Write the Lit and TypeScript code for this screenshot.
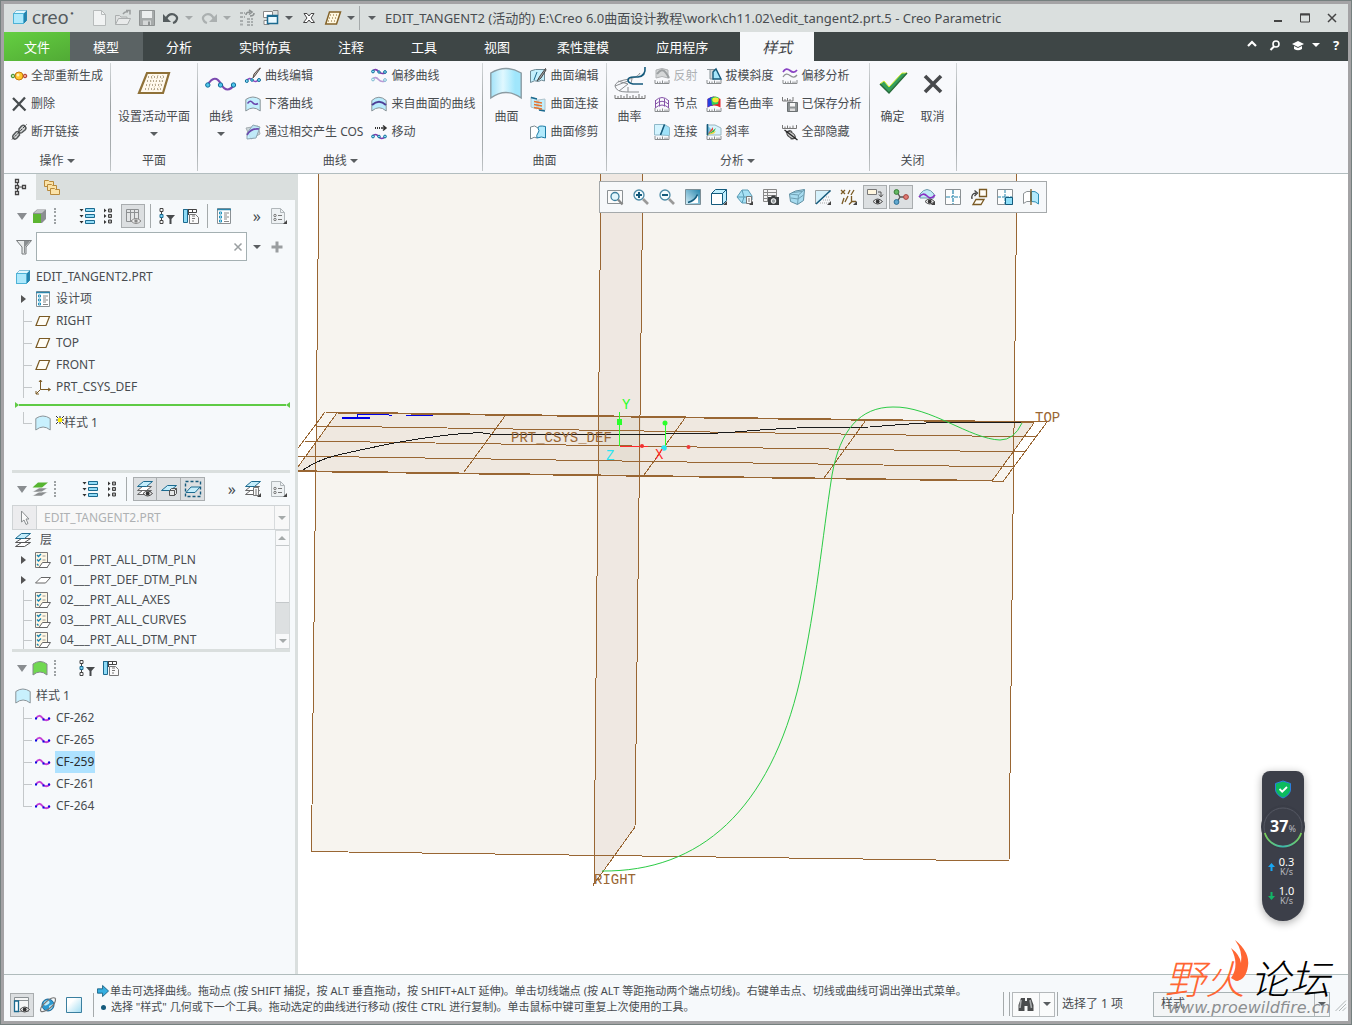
import { LitElement, html, css, svg, nothing, type TemplateResult } from "lit";
import { customElement, state } from "lit/decorators.js";

const RULER = svg`<path d="M1 12v3.500h14V12M3.500 13.500v2M6 13.500v2M8.500 12.500v3M11 13.500v2M13 13.500v2" fill="none" stroke="#8a8d8f"/>`;
const DROP = svg`<path d="M16 12v4h-4z" fill="#444"/>`;
const PAGE_LINES = svg`<path d="M9 8h3M9 10.500h3M9 13h2" stroke="#777" fill="none"/>`;
const EYE = svg`<path d="M6 12.500q4.500-5 9.500 0q-5 5-9.500 0z" fill="#e8e8e8" stroke="#4a4a4a"/><circle cx="10.700" cy="12.500" r="1.900" fill="#333"/>`;

const GLYPHS: Record<string, TemplateResult> = {
  cube: svg`<path d="M1.500 4.500l3-3h10v10l-3 3h-10z" fill="#8adcf7" stroke="#2c8db5"/><path d="M11.500 4.500l3-3v10l-3 3z" fill="#2583ad"/><path d="M1.500 4.500h10v10h-10z" fill="#aee9fc" stroke="#4db2d6"/><path d="M2 4l2.500-2.500h10L12 4z" fill="#e2f8ff"/>`,
  newfile: svg`<path d="M2.500 .500h8l4 4v11h-12z" fill="#f1f3f3" stroke="#b7bbbb"/><path d="M10.500 .500v4h4" fill="none" stroke="#b7bbbb"/>`,
  open: svg`<path d="M.500 14.500v-9h4l1.500 1.500h6v2" fill="#dfe1e1" stroke="#abafaf"/><path d="M.500 14.500l3-6h12l-3 6z" fill="#e8eaea" stroke="#abafaf"/><path d="M8 4q2-3 5-2M11 .500h4v4" fill="none" stroke="#9a9e9e" stroke-width="1.500"/>`,
  save: svg`<path d="M.500 .500h15v15h-15z" fill="#a7abab" stroke="#8f9393"/><path d="M3 1h10v7H3z" fill="#eceeee"/><path d="M4 10.500h8V15H4z" fill="#d5d8d8"/><path d="M9 11.500h2V15H9z" fill="#8f9393"/>`,
  undo: svg`<path d="M3 9q3-6 8-4.500q5 2.500 2 6.500q-1 1.500-3 2" fill="none" stroke="#555c5e" stroke-width="2.300"/><path d="M0 4v8h8z" fill="#555c5e"/>`,
  redo: svg`<path d="M13 9Q10 3 5 4.500Q0 7 3 11q1 1.500 3 2" fill="none" stroke="#abb0b0" stroke-width="2.300"/><path d="M16 4v8H8z" fill="#abb0b0"/>`,
  regen: svg`<path d="M1 3h5M1 7h5M1 11h4M1 14.500h4M8 9h6M8 12h6M8 15h6" stroke="#a8adad" stroke-width="2" stroke-dasharray="3 1"/><path d="M7 5q0-3 4-3M10 0l3 2-3 2.500M15 3q0 3-4 3" fill="none" stroke="#8d9292" stroke-width="1.600"/>`,
  windows: svg`<path d="M.500 1.500h9v6h-9z" fill="#fff" stroke="#888"/><path d="M1 10.500h5v4H1z" fill="#fff" stroke="#888"/><path d="M10 .500h5v5" fill="none" stroke="#888"/><path d="M4.500 5.500h10v8h-10z" fill="#e9f9ff" stroke="#1b6a8f" stroke-width="1.500"/><path d="M4.500 6.500h10" stroke="#1b6a8f"/>`,
  closex: svg`<path d="M3 3.500h3l2 2.500 2-2.500h3L10 8l3.500 4.500h-3.500L8 10l-2 2.500H2.500L6 8z" fill="#fff" stroke="#444"/>`,
  planeGrid: svg`<path d="M4.500 2h11l-4 12H.700z" fill="#fff8e2" stroke="#85642a" stroke-width="1.500"/><path d="M5 5h8M4 8h8M3 11h8" stroke="#85642a" stroke-dasharray="1 2"/>`,
  regenAll: svg`<path d="M0 8h16" stroke="#777"/><circle cx="2" cy="8" r="1.800" fill="#b8e09c" stroke="#3c8a2c"/><circle cx="14" cy="8" r="1.800" fill="#f0a090" stroke="#b0382c"/><circle cx="8" cy="8" r="4" fill="#ffc62e" stroke="#c47a10"/><circle cx="7" cy="7" r="1.500" fill="#fff2b5"/>`,
  del: svg`<path d="M2 2l12.500 12.500M14 1.500L2 14.500" stroke="#474c4f" stroke-width="2.300"/>`,
  unlink: svg`<path d="M8 5l2.500-3q2-1.500 3.500 0t.500 3.500L11 8.500q-1.500 1-3 0zM8 8.500Q6.500 7 5 8L2 11.500q-1 1.500 .500 3t3.500-.500L8.500 11z" fill="#d5d8d9" stroke="#55595b" stroke-width="1.500"/><path d="M1 15.500L15.500 .500" stroke="#333" stroke-dasharray="3 1"/>`,
  curveEdit: svg`<path d="M1.500 13q3-4.500 6-1t7-1" fill="none" stroke="#8a4cc0" stroke-width="1.500"/><circle cx="1.800" cy="13" r="1.500" fill="#7fdcf7" stroke="#136f9b"/><circle cx="7" cy="12" r="1.300" fill="#7fdcf7" stroke="#136f9b"/><circle cx="14" cy="12" r="1.500" fill="#7fdcf7" stroke="#136f9b"/><path d="M15.500 0l-5 7-2.500 3 1-4L14 .500z" fill="#b9bcbd" stroke="#5a4c44"/>`,
  dropCurve: svg`<path d="M.800 3.500q7-5 14.400 0v11.500q-7-6-14.400 0z" fill="#c3effd" stroke="#8a9499"/><path d="M2.500 7.500q3-4 5-1t5.500 1" fill="none" stroke="#6b47ad" stroke-width="1.500"/>`,
  cosCurve: svg`<path d="M1 4l12-2 2 8-9 5z" fill="#cdd6da" stroke="#a5adb1"/><path d="M2 9l6-8 7 2-4 11-9 1z" fill="#bdeeff" fill-opacity=".800" stroke="#8ea6b1"/><path d="M2 11Q6 4 14 5" fill="none" stroke="#6b47ad" stroke-width="1.600"/>`,
  offsetCurve: svg`<path d="M1.500 3q3-3 6 .500t7 1" fill="none" stroke="#7b3fae" stroke-width="1.600"/><circle cx="2" cy="3.500" r="1.400" fill="#8fe3fb" stroke="#136f9b"/><circle cx="8" cy="4" r="1.200" fill="#8fe3fb" stroke="#136f9b"/><circle cx="14" cy="4" r="1.400" fill="#8fe3fb" stroke="#136f9b"/><path d="M1.500 11q3-3 6 .500t7 1" fill="none" stroke="#b99bd6" stroke-width="1.600"/><circle cx="2" cy="11.500" r="1.400" fill="#e2f7fd" stroke="#82bcd3"/><circle cx="14" cy="12" r="1.400" fill="#e2f7fd" stroke="#82bcd3"/>`,
  fromSurface: svg`<path d="M.800 4.500q7-6.500 14.400 0v10.500q-7-6.500-14.400 0z" fill="#b9ecfd" stroke="#8a9499"/><path d="M1 9Q8 2.500 15 9" fill="none" stroke="#4d3f96" stroke-width="2"/>`,
  move: svg`<path d="M4 4h6" stroke="#333" stroke-width="2" stroke-dasharray="1 1"/><path d="M10 4h5M12 1.500L15 4l-3 2.500" fill="none" stroke="#333" stroke-width="1.500"/><path d="M1.500 12.500q3-4 6 0t7 0" fill="none" stroke="#7b3fae" stroke-width="1.600"/><circle cx="2" cy="12.500" r="1.400" fill="#8fe3fb" stroke="#136f9b"/><circle cx="8" cy="12.500" r="1.300" fill="#8fe3fb" stroke="#136f9b"/><circle cx="14" cy="12.500" r="1.400" fill="#8fe3fb" stroke="#136f9b"/>`,
  surfEdit: svg`<path d="M.500 3l5-1.500h9V13q-3-2-6 .500q-4-2-8 1z" fill="#c3effd" stroke="#6e8a96"/><path d="M4 12l3-8" stroke="#1b6a8f"/><path d="M15.500 .500L10 8l-3 5 4-3 5-8z" fill="#a5a9ab" stroke="#444"/>`,
  surfJoin: svg`<path d="M1 1l6 2v10l-6-2zM8 4l7-1v11l-7-1z" fill="#c3effd" stroke="#b0c3cb"/><path d="M1 1.500l6 1.500M9 14l6 1" stroke="#1b6a8f" stroke-width="1.500"/><path d="M4 5.500l8 1.500M4 8.500l8 1.500M4 11.500l8 1.500" stroke="#e6732c" stroke-width="1.300"/>`,
  surfTrim: svg`<path d="M8 4q-3-3.500-7.500-1v12q4-3 6.500-1" fill="#fff" stroke="#7b8b92"/><path d="M8 4q0-3 7.500-1.500V14q-4-2-8.500 0q-1-3 1-5T8 4z" fill="#b2eafc" stroke="#1d7ca6"/>`,
  reflect: svg`<path d="M2 2q6-3 12 0v8q-6-3-12 0z" fill="#d5d7d8" stroke="#b0b3b5"/><path d="M3 6q5-7 9-1t2 4" fill="none" stroke="#9b9fa1" stroke-width="2"/>${RULER}`,
  knots: svg`<path d="M1 5Q8-2 15 5M1 8.500Q8 2 15 8.500M1 12Q8 6 15 12M1.500 4v8M5.500 2.500v8M10.500 2.500v8M14.500 4v8" fill="none" stroke="#8553a8"/>${RULER}`,
  connect: svg`<path d="M.500 .500h10l-4 10.500H.500z" fill="#d3f4ff" stroke="#8fb9c9"/><path d="M10.500 .500l5 3v8l-9-.500z" fill="#9fe2fa" stroke="#8fb9c9"/><path d="M10.500 .500L6.500 11" stroke="#145a7c" stroke-width="1.500"/>${RULER}`,
  draft: svg`<path d="M1 1.500h8M8 1v10H4V1" fill="#d5d8da" stroke="#8a9499"/><path d="M7 11V4l3-3 5 10z" fill="#a6e6fb" stroke="#145a7c" stroke-width="1.400"/>${RULER}`,
  shaded: svg`<path d="M1.500 3q6.500-5 13 0v8.500q-6.500-4-13 0z" fill="#e8262b"/><path d="M1.500 3q3-2.500 6.500-2.500l-1 9q-3 0-5.500 2z" fill="#263fe0"/><path d="M5 2q5-3 8 0l-1 6-6 1z" fill="#31d158"/><ellipse cx="9.500" cy="4" rx="3.200" ry="2.400" fill="#fbe93a"/>${RULER}`,
  slope: svg`<path d="M1 1h8l6 3v7H1z" fill="#d6f3fd" stroke="#9ab4bf"/><path d="M1 11V1l5 5z" fill="#7cc8e6"/><path d="M1 11l6-8v3z" fill="#e8463b"/><path d="M1 11l9-7-2 4z" fill="#42b649"/><path d="M1 11l9-4-2 2.500z" fill="#f4d536"/><path d="M1.500 0v11.500" stroke="#145a7c" stroke-width="1.500"/>${RULER}`,
  offsetAna: svg`<path d="M1 4q3-5 7-1.500T15 2" fill="none" stroke="#8a45c4" stroke-width="1.700"/><path d="M1 9q3-5 7-1.500T15 7" fill="none" stroke="#8f9294" stroke-width="1.300"/>${RULER}`,
  savedAna: svg`<path d="M.500 1v4H11V1M3 3v2M5.500 2v3M8 3v2" fill="none" stroke="#777"/><path d="M5.500 6.500h10v9h-10z" fill="#8d9294" stroke="#6a6f71"/><path d="M8 7h5v3.500H8z" fill="#f5f5f5"/><path d="M8 12.500h5V15H8z" fill="#ddd"/>`,
  hideAll: svg`<path d="M.500 1v3.500h14V1M3 2.500v2M5.500 1.500v3M8 2.500v2M11 1.500v3" fill="none" stroke="#777"/><path d="M4 9q4-4 6-1M13.500 12.500q0 3-5 2" fill="none" stroke="#555" stroke-width="1.300"/><ellipse cx="9" cy="11" rx="4.500" ry="2.500" transform="rotate(35 9 11)" fill="#ccc" stroke="#444"/><path d="M2.500 6L15.500 16" stroke="#222" stroke-width="1.300"/>`,
  bigPlane: svg`<path d="M9 4h22l-6 20H1z" transform="translate(0 2)" fill="#fff9ee" stroke="#8f7138" stroke-width="2.200"/><path d="M10 10h18M9 14h18M8 18h18M7 22h18" stroke="#6a5633" stroke-dasharray="1 2"/><path d="M15 8l-5 16M20 8l-5 16M25 8l-5 16" stroke="#cbb98f" stroke-dasharray="1 2"/>`,
  bigCurve: svg`<path d="M2.500 18Q10 6 16 17t14 0" fill="none" stroke="#7b4ab0" stroke-width="2.200"/><circle cx="2.800" cy="18" r="2.200" fill="#4fc5ea" stroke="#136f9b"/><circle cx="15.500" cy="18" r="2.200" fill="#4fc5ea" stroke="#136f9b"/><circle cx="28.500" cy="18" r="2.200" fill="#4fc5ea" stroke="#136f9b"/>`,
  bigSurface: svg`<defs><linearGradient id="bs"><stop offset="0" stop-color="#a2e2f8"/><stop offset=".400" stop-color="#e0f8ff"/><stop offset=".800" stop-color="#a0e6fc"/></linearGradient></defs><path d="M.800 6Q16-3 31.200 6v25Q16 20 .800 31z" fill="url(#bs)" stroke="#8b9ba2" stroke-width="1.400"/>`,
  bigCurvature: svg`<path d="M1 19q0-4 9-6 14-2 16-7M1 19q1 6 12 6h12M1 19l13-5M5 24l9-7M14 25v-5M4 14l10 3M18 12l-1 4" fill="none" stroke="#8a8d90"/><path d="M31 0q1 9-7 10H20q-6 0-6 3 0 3 5 4h10" fill="none" stroke="#145a7c" stroke-width="1.600"/><path d="M1 28v3.500h30V28M4 29v2M7 28v3M10 29v2M13 27v4M16 29v2M19 28v3M22 29v2M25 27v4M28 29v2" fill="none" stroke="#777"/>`,
  bigOk: svg`<path d="M3 17l4-3 5 6L25 6h5L12 26z" fill="#35a05c" stroke="#d8ee2e"/><path d="M3 17l9 9L30 6" fill="none" stroke="#276b3e" stroke-width="1.500"/>`,
  bigCancel: svg`<path d="M8 9l16 16M24 9L8 25" stroke="#47494c" stroke-width="3.600"/>`,
  treeTab: svg`<g transform="translate(2 0)"><path d="M3.500 5v6M5 8h6M3.500 3v2M3.500 11v2" stroke="#444"/><path d="M1.500 .500h3v3h-3zM1.500 6.500h3v3h-3zM1.500 12.500h3v3h-3zM8.500 6.500h3v3h-3z" fill="#fff" stroke="#444" stroke-width="1.300"/></g>`,
  folders: svg`<g fill="#fbe3a8" stroke="#b88a3c"><path d="M.500 1.500h4l1 1h4v5h-9z"/><path d="M3.500 5.500h4l1 1h4v5h-9z"/><path d="M6.500 9.500h4l1 1h4v5h-9z"/></g>`,
  greenCube: svg`<path d="M1 5l4-3.500h9V11l-4 4H1z" fill="#8b8e90"/><path d="M2 5l3-3h8l-3 3z" fill="#c1c4c5"/><path d="M1 6h8v9H1z" fill="#5cb531"/>`,
  expand: svg`<path d="M.500 1h4l-2 2.500zM.500 7h4l-2 2.500zM.500 13h4l-2 2.500z" fill="#333"/><g fill="#93dcf7" stroke="#1b6a8f"><path d="M6.500 .500h9v3h-9zM6.500 6.500h9v3h-9zM6.500 12.500h9v3h-9z"/></g>`,
  collapse: svg`<path d="M4 .500v4L6.500 2.500zM4 6v4L6.500 8zM4 12v4l2.500-2z" fill="#333"/><g fill="#aaa" stroke="#444"><path d="M8.500 1h3v3h-3zM8.500 6.500h3v3h-3zM8.500 12h3v3h-3z"/></g>`,
  columnsEye: svg`<path d="M1.500 1.500h12v12h-12zM1.500 4.500h12M5.500 1.500v12M9.500 1.500v12" fill="#e3e5e6" stroke="#8d9092"/><path d="M6 13q5-5 10 0q-5 5-10 0z" fill="#eee" stroke="#888"/><circle cx="11" cy="13" r="1.700" fill="#888"/>`,
  treeFilter: svg`<path d="M2.500 2v12" stroke="#444"/><path d="M1 .500h3v3H1zM1 12.500h3v3H1z" fill="#fff" stroke="#444"/><path d="M1 6.500h3v3H1z" fill="#7ad3f5" stroke="#1b6a8f"/><path d="M7 7h9l-3.500 4v5h-2v-5z" fill="#474a4c"/>`,
  columnsPage: svg`<path d="M.500 1.500h13v3h-13zM5.500 1v6M9.500 1v4" fill="#fff" stroke="#444"/><path d="M.500 1.500h4v13h-4z" fill="#8edbf6" stroke="#1b6a8f"/><path d="M6.500 6.500h6l3 3v6h-9z" fill="#fafafa" stroke="#777"/>${PAGE_LINES}`,
  listPage: svg`<path d="M1.500 .500h13v15h-13z" fill="#fff" stroke="#8b9194"/><path d="M1 1.500h14" stroke="#2c86ac" stroke-width="1.500"/><path d="M3.500 4h2v2h-2zM3.500 8h2v2h-2zM3.500 12h2v2h-2z" fill="#fff" stroke="#2293bf"/><path d="M8 5h5M8 7h3M8 9h5M8 11h3M8 13.500h5" stroke="#888"/>`,
  settingsPage: svg`<path d="M.500 .500h9l4 4v11h-13z" fill="#eef2f4" stroke="#b1b7ba"/><path d="M9.500 .500v4h4" fill="none" stroke="#b1b7ba"/><circle cx="4" cy="7.500" r="1.200" fill="none" stroke="#777"/><circle cx="4" cy="11.500" r="1.200" fill="none" stroke="#777"/><path d="M7 7.500h4M7 11.500h4" stroke="#777"/>${DROP}`,
  funnel: svg`<path d="M.500 1.500h15L10 8v7H6V8z" fill="#e9ecec" stroke="#777b7d"/><path d="M8 2h6L9 8v6H8z" fill="#8b8f91"/>`,
  plus: svg`<path d="M8 2.500v11M2.500 8h11" stroke="#9a9ea0" stroke-width="3"/>`,
  clear: svg`<path d="M4.500 4.500l7 7M11.500 4.500l-7 7" stroke="#9a9fa1" stroke-width="1.500"/>`,
  datum: svg`<path d="M4.500 3.500h10l-3.500 9H1z" fill="#fffdf6" stroke="#7a5a24" stroke-width="1.200"/>`,
  csys: svg`<path d="M5.500 1v9.500L1 15M5.500 10.500H15M4 3l1.500-2L7 3M13 9l2.500 1.500L13 12M1 12v3h3" fill="none" stroke="#7a5a24"/>`,
  surf: svg`<path d="M.800 3.500q7-5 14.400 0v11.500q-7-6-14.400 0z" fill="#c8f0fd" stroke="#8b9499"/>`,
  greenSurf: svg`<path d="M1 4q7-5 14 0v11q-7-6-14 0z" fill="#70d850" stroke="#858a8c"/>`,
  layersGreen: svg`<path d="M.500 15h9l6-4H7zM.500 11h9l6-4H7z" fill="#8a8d8f" stroke="#f7f9fa" stroke-width=".500"/><path d="M.500 6.500H10l6-5H6z" fill="#56b531"/>`,
  layers: svg`<g fill="#fff" stroke="#555"><path d="M.500 14.500h9l6-4h-9zM.500 10.500h9l6-4h-9z"/></g><path d="M.500 6.500h9l6-5h-9z" fill="#c4edfb" stroke="#1b6a8f"/>`,
  layersEye: svg`<g fill="#fff" stroke="#666"><path d="M.500 13.500h9l5-4h-9zM.500 9.500h9l5-4h-9z"/></g><path d="M.500 5.500h9l6-5h-9z" fill="#c4edfb" stroke="#1b6a8f"/>${EYE}`,
  layerCube: svg`<path d="M.500 9.500h9l6-5h-9z" fill="#c4edfb" stroke="#1b6a8f"/><path d="M8.500 9.500l2-2h5v5l-2 2h-5zM8.500 9.500h5v5M13.500 9.500l2-2" fill="#e6e8e8" stroke="#555"/>`,
  layerSel: svg`<path d="M.500 .500h15v15H.500z" fill="none" stroke="#145a7c" stroke-width="1.400" stroke-dasharray="3 2"/><path d="M1 11.500h9l5-5.500H6z" fill="#c4edfb" stroke="#1b6a8f"/>`,
  layersPage: svg`<g fill="#fff" stroke="#666"><path d="M.500 13.500h9l5-4h-9zM.500 9.500h9l5-4h-9z"/></g><path d="M.500 5.500h9l6-5h-9z" fill="#c4edfb" stroke="#1b6a8f"/><path d="M8.500 6.500h5v8h-5z" fill="#fafafa" stroke="#777"/><path d="M10 9h2M10 11h2M10 13h2" stroke="#777"/>${DROP}`,
  pointer: svg`<path d="M4.500 1v11l2.500-2 2 4.500 2-1-2-4.500h3z" fill="#fafafa" stroke="#8b8f91"/>`,
  layerRow: svg`<path d="M.500 .500h12v15H.500z" fill="#fdf6e4" stroke="#777"/><path d="M2 3l1.500 1.500L6 2M2 7.500L3.500 9 6 6.500M2 12l1.500 1.500" fill="none" stroke="#1785b5" stroke-width="1.400"/><path d="M7.500 4h3M7.500 8h3" stroke="#999"/><path d="M4 15.500h8l3.500-5H7.500z" fill="#fff" stroke="#666"/>`,
  flatLayer: svg`<path d="M.500 11h10l5-5.500H6z" fill="#fff" stroke="#666"/>`,
  cf: svg`<path d="M1 8.500q3-5 6.500-.500t7.500 0" fill="none" stroke="#c43fd6" stroke-width="2"/><path d="M0 7.500h2v2H0zM7.500 8.500h2v2h-2zM13 7.500h2v2h-2z" fill="#0a0ae0"/>`,
  zoomFit: svg`<path d="M.500 1.500h15v13H.500z" fill="#fbfbfb" stroke="#8b9194"/><circle cx="8" cy="7.500" r="4" fill="#e2f6fd" stroke="#3c7f9e" stroke-width="1.300"/><path d="M11 10.500l4.500 5" stroke="#888" stroke-width="2.300"/>`,
  zoomIn: svg`<circle cx="6" cy="6" r="5" fill="#f3fbfe" stroke="#4b8aa6" stroke-width="1.300"/><path d="M6 3v6M3 6h6" stroke="#145a7c" stroke-width="2"/><path d="M10 10l5 5" stroke="#999" stroke-width="2.600"/>`,
  zoomOut: svg`<circle cx="6" cy="6" r="5" fill="#f3fbfe" stroke="#4b8aa6" stroke-width="1.300"/><path d="M3 6h6" stroke="#145a7c" stroke-width="2"/><path d="M10 10l5 5" stroke="#999" stroke-width="2.600"/>`,
  repaint: svg`<defs><linearGradient id="rp" x1="1" y1="0" x2="0" y2="1"><stop offset="0" stop-color="#2383ab"/><stop offset="1" stop-color="#d8f1fa"/></linearGradient></defs><path d="M.500 .500h15v15H.500z" fill="url(#rp)" stroke="#7d8f97"/><path d="M2 14h2q6-1 9-8v8z" fill="#fff"/><path d="M3 13.500q7-2 9.500-8" fill="none" stroke="#145a7c" stroke-width="1.600"/>`,
  display: svg`<path d="M.500 4.500l4-4h11v11l-4 4H.500z" fill="#bfeefd" stroke="#145a7c"/><path d="M.500 4.500h11v11M11.500 4.500l4-4" fill="none" stroke="#145a7c"/><path d="M1 5h10v10H1z" fill="#fff"/>${DROP}`,
  orient: svg`<path d="M0 8l5-7h6l4 6v4l-4 3H5z" fill="#a6e1f5" stroke="#5b9cb5"/><path d="M0 8h15M5 1l2 7-2 6" fill="none" stroke="#5b9cb5"/><path d="M9.500 7.500h5v7h-5z" fill="#fafafa" stroke="#777"/><path d="M11 10h2M11 12h2" stroke="#777"/>${DROP}`,
  camera: svg`<path d="M.500 .500h13v12H.500zM.500 3.500h13M.500 6.500h13M.500 9.500h13M4.500 .500v12" fill="#f4f4f4" stroke="#888"/><path d="M5 8h3l1-1.500h3L13 8h3v8H5z" fill="#3c3f41"/><circle cx="10.500" cy="12" r="2.300" fill="#9aa0a2" stroke="#fff"/>`,
  persp: svg`<path d="M.500 5l6-3 9-1.500-1 11-6 4-7-3z" fill="#a7dcf0" stroke="#5f8ea1"/><path d="M.500 5l9 1 6-5.500M9.500 6l-1 9.500M4 3.500l9-1M2 9l7 1 5.500-4" fill="none" stroke="#6d9fb3"/>`,
  section: svg`<path d="M.500 1.500h15L1 15z" fill="#d6f1fb"/><path d="M.500 15V1.500h15" fill="none" stroke="#9aa0a2"/><path d="M1 15L15.500 1.500" stroke="#145a7c" stroke-width="1.600"/><path d="M5 14h10M8 11h7M11 8h4" stroke="#aaa" stroke-dasharray="1 1"/>${DROP}`,
  datums: svg`<path d="M0 1l4 4M4 1L0 5M9 1L7 5M3 9l-2 6M7 7l-3 6M13 1l-3 5" stroke="#7a5a24" stroke-width="1.300"/><path d="M10.500 7v6L8 15.500M10.500 12.500H15" fill="none" stroke="#7a5a24" stroke-width="1.300"/>${DROP}`,
  annot: svg`<path d="M.500 .500h9v5h-9z" fill="#fff6df" stroke="#777"/><path d="M11 3h3v4M12 5.500l2 2.500 2-2.500" fill="none" stroke="#555"/>${EYE}`,
  spin: svg`<path d="M4 3l3 5 6 0M7 8l-3 5" fill="none" stroke="#555" stroke-width="1.300"/><circle cx="3.500" cy="3" r="2.400" fill="#63b862" stroke="#397c38"/><circle cx="13" cy="8" r="2.400" fill="#e07a74" stroke="#a3433d"/><circle cx="3.500" cy="13" r="2.400" fill="#62a8cf" stroke="#2b6f96"/>`,
  curveEye: svg`<path d="M1 5q7-9 14 0v4H1z" fill="#bfe9f8" stroke="#6e98a9"/><path d="M0 8q4-5 8-1t8-1" fill="none" stroke="#8a2fc4" stroke-width="1.700"/>${EYE}${DROP}`,
  four: svg`<path d="M.500 .500h15v15H.500z" fill="#fdfdfd" stroke="#8b9194"/><path d="M8 1v14M1 8h14" stroke="#2383ab" stroke-width="1.200" stroke-dasharray="4 1 2 1"/>`,
  rotatePlane: svg`<path d="M8.500 .500h7v7h-7zM5 10.500h8l-3 5H2z" fill="#fffdf6" stroke="#7a5a24" stroke-width="1.300"/><path d="M1 10q-1-5.500 4-6M3.500 1.500l3 2.500-3 3" fill="none" stroke="#444" stroke-width="1.300"/>`,
  fourOne: svg`<path d="M.500 .500h15v15H.500z" fill="#fdfdfd" stroke="#8b9194"/><path d="M8 1v14M1 8h14" stroke="#2383ab" stroke-dasharray="3 1"/><path d="M8.500 8.500h7v7h-7z" fill="#8edff9" stroke="#145a7c"/>`,
  mirrorSurf: svg`<path d="M.500 4.500q3-3 7-2v10q-4-1-7 2z" fill="#fff" stroke="#8b9194"/><path d="M8.500 2.500Q12 1.500 15.500 5v10q-3-3-7-2.500z" fill="#b2eafc" stroke="#2f8eb4"/><path d="M8 0v16" stroke="#7a5a24" stroke-width="1.300"/>`,
  panelEye: svg`<path d="M.500 .500h14v14H.500zM.500 3.500h14" fill="#f5f6f6" stroke="#8b9194"/><path d="M.500 4h4v10.500h-4z" fill="#fff" stroke="#1b6a8f" stroke-width="1.300"/>${EYE}`,
  globe: svg`<circle cx="8" cy="8" r="6" fill="#2a9ad2" stroke="#1a6796"/><path d="M4 5q3-3 5-1t-2 4-3-3zM9 9l4-2q0 5-4 6z" fill="#bdeaf9"/><path d="M1 14.500Q-1 11 6 5T15.500 1.500M1 14.500q3 1 9-3.500t5.500-9.500" fill="none" stroke="#777" stroke-width="1.200"/>`,
  square: svg`<defs><linearGradient id="sq" x2="1" y2="1"><stop offset=".300" stop-color="#fff"/><stop offset="1" stop-color="#9fdcf2"/></linearGradient></defs><path d="M.500 .500h15v15H.500z" fill="url(#sq)" stroke="#3a7f9f"/>`,
  binoculars: svg`<path d="M3 2h4v3h2V2h4l2.500 7v6H9.500v-5h-3v5H.500V9z" fill="#4a4c4d"/><path d="M3 4l-1 8M12 4l1.500 8" stroke="#a8abac" stroke-width="1.600"/>`,
  hint: svg`<path d="M.500 4.500h6v-4l7 6.500-7 6.500v-4h-6z" fill="#35aee0" stroke="#145a7c"/>`,
  shield: svg`<path d="M8 0l7.500 2.500v7Q14 14.500 8 17 2 14.500 .500 9.500v-7z" fill="#0cbb5e" stroke="#2b7fe0"/><path d="M4.500 8l2.700 2.700L12 6" fill="none" stroke="#fff" stroke-width="1.800"/>`,
  min: svg`<path d="M4 11h8" stroke="#444" stroke-width="2"/>`,
  max: svg`<path d="M3.500 4h9v8h-9z" fill="none" stroke="#444"/><path d="M3 4.500h10" stroke="#444" stroke-width="2"/>`,
  close: svg`<path d="M4 4l8 8M12 4l-8 8" stroke="#444" stroke-width="1.500"/>`,
  up: svg`<path d="M4 9l4-4 4 4" fill="none" stroke="#fff" stroke-width="2.200"/>`,
  search: svg`<circle cx="9" cy="7" r="3" fill="none" stroke="#fff" stroke-width="1.600"/><path d="M7 9.500L3.500 13" stroke="#fff" stroke-width="2"/>`,
  hat: svg`<path d="M2 7l6-3 6 3-6 3z" fill="#fff"/><path d="M4 9v3q4 2.500 8 0V9l-4 2z" fill="#fff"/>`,
  grip: svg`<path d="M4 16L16 4M8 16l8-8M12 16l4-4" stroke="#a6abad"/>`,
};

const icon = (name: string, size = 16, box = size) =>
  html`<svg class="ic" width=${size} height=${size} viewBox="0 0 ${box} ${box}" aria-hidden="true">${GLYPHS[name]}</svg>`;
const arrow = (cls = "") => html`<span class="arr ${cls}"></span>`;

type Cmd = [string, string, boolean?];
interface Group { label: string; more?: boolean; big: [string, string, boolean?][]; cols: Cmd[][] }

const GROUPS: Group[] = [
  { label: "操作", more: true, big: [], cols: [[["regenAll", "全部重新生成"], ["del", "删除"], ["unlink", "断开链接"]]] },
  { label: "平面", big: [["bigPlane", "设置活动平面", true]], cols: [] },
  { label: "曲线", more: true, big: [["bigCurve", "曲线", true]], cols: [
    [["curveEdit", "曲线编辑"], ["dropCurve", "下落曲线"], ["cosCurve", "通过相交产生 COS"]],
    [["offsetCurve", "偏移曲线"], ["fromSurface", "来自曲面的曲线"], ["move", "移动"]]] },
  { label: "曲面", big: [["bigSurface", "曲面"]], cols: [[["surfEdit", "曲面编辑"], ["surfJoin", "曲面连接"], ["surfTrim", "曲面修剪"]]] },
  { label: "分析", more: true, big: [["bigCurvature", "曲率"]], cols: [
    [["reflect", "反射", true], ["knots", "节点"], ["connect", "连接"]],
    [["draft", "拔模斜度"], ["shaded", "着色曲率"], ["slope", "斜率"]],
    [["offsetAna", "偏移分析"], ["savedAna", "已保存分析"], ["hideAll", "全部隐藏"]]] },
  { label: "关闭", big: [["bigOk", "确定"], ["bigCancel", "取消"]], cols: [] },
];
const TABS = ["模型", "分析", "实时仿真", "注释", "工具", "视图", "柔性建模", "应用程序"];
const VIEW_TOOLS = ["zoomFit", "zoomIn", "zoomOut", "repaint", "display", "orient", "camera", "persp", "section", "datums", "annot", "spin", "curveEye", "four", "rotatePlane", "fourOne", "mirrorSurf"];
const FEATURES: [string, string][] = [["datum", "RIGHT"], ["datum", "TOP"], ["datum", "FRONT"], ["csys", "PRT_CSYS_DEF"]];
const LAYERS: [string, string, boolean][] = [
  ["layerRow", "01___PRT_ALL_DTM_PLN", true], ["flatLayer", "01___PRT_DEF_DTM_PLN", true],
  ["layerRow", "02___PRT_ALL_AXES", false], ["layerRow", "03___PRT_ALL_CURVES", false], ["layerRow", "04___PRT_ALL_DTM_PNT", false]];
const CURVES = ["CF-262", "CF-265", "CF-259", "CF-261", "CF-264"];

@customElement("app-root")
export class AppRoot extends LitElement {
  @state() private selected = "CF-259";

  static styles = css`
    :host { display: block; font: 12px/16px "Noto Sans", "Noto Sans CJK SC", sans-serif; color: #484c50; }
    * { box-sizing: border-box; }
    button, select, input { font: inherit; color: inherit; border: 0; background: none; padding: 0; margin: 0; border-radius: 0; }
    button { display: inline-flex; align-items: center; justify-content: center; white-space: nowrap; }
    .ic { display: block; flex: none; overflow: visible; }
    .frame { min-height: 100vh; background: #a4a3a5; border: 1px solid #75807f; padding: 3px; display: flex; }
    .window { flex: 1; min-width: 0; display: grid; grid-template-rows: 28px 29px auto 1fr 47px; position: relative; background: #f7f9fb; }
    .arr { width: 0; height: 0; border: 4px solid transparent; border-top-color: #5a5e61; border-bottom: 0; flex: none; }
    .arr.dim { border-top-color: #a5aaaa; }
    .arr.white { border-top-color: #fff; }

    .title { display: flex; align-items: center; background: #dadfde; padding: 0 8px; }
    .brand { display: flex; align-items: center; gap: 4px; width: 79px; font: 19px/20px Lato, sans-serif; color: #555b5e; padding-bottom: 2px; }
    .reg { font-size: 5px; line-height: 12px; align-self: flex-start; margin-left: -2px; }
    .quick { display: flex; align-items: center; gap: 8px; }
    .pair { display: flex; align-items: center; gap: 6px; }
    .bar { width: 1px; height: 24px; background: #a5aaab; flex: none; }
    .quick .bar { margin-left: -4px; }
    .name { margin: 0 0 0 9px; font-size: 13px; font-weight: 400; flex: 1; white-space: nowrap; overflow: hidden; }
    .winctl { display: flex; gap: 11px; }

    .tabs { display: flex; background: #3e4646; color: #fff; font-size: 13px; }
    .tabs button { padding: 0 24px 0 23px; }
    .tabs .file { padding: 0 20px; background: linear-gradient(160deg, #64cf41, #51aa35); }
    .tabs .first { background: #5b6364; }
    .tabs .active { margin-left: 8px; padding: 0 22px; background: #f7f9fb; color: #3e4246; font-size: 15px; font-style: italic; }
    .tabs .help { margin-left: auto; display: flex; align-items: center; gap: 7px; padding: 0 8px 4px 0; }
    .tabs .help button { padding: 0; }
    .tabs .help .arr { margin-left: -1px; }
    .tabs .help .q { font-weight: 700; width: 8px; margin-left: 5px; }

    .ribbon { display: flex; border-bottom: 1px solid #b2bdbf; background: #f8f9fc; }
    .group { display: grid; grid-template-rows: 84px 28px; padding: 0 7px; }
    .body { display: flex; gap: 8px; }
    .sep { width: 1px; margin: 2px 0; background: linear-gradient(#d3d7d9, #9da2a4 40%, #a9aeb0 80%, #c3c7c9); }
    .big { flex-direction: column; justify-content: flex-start; padding-top: 6px; min-width: 32px; }
    .big .cap { margin-top: 10px; }
    .big .arr { margin-top: 7px; }
    .col { display: grid; grid-template-rows: repeat(3, 28px); padding-top: 1px; }
    .cmd { gap: 4px; justify-content: flex-start; }
    .cmd:disabled { color: #adb0b3; }
    .glabel { display: flex; align-items: center; justify-content: center; gap: 3px; padding-top: 4px; }

    .main { display: grid; grid-template-columns: 294px 1fr; min-height: 0; }
    .side { border-right: 3px solid #dadfde; background: #f6f9fb; }
    .ptabs { display: flex; height: 26px; background: #dadfde; margin-right: -3px; }
    .ptabs button { width: 32px; }
    .ptabs .on { background: #f6f9fb; }
    .tools { display: flex; align-items: center; height: 32px; padding: 0 8px 0 13px; }
    .tools .arr { border-width: 5px; border-top: 7px solid #898d90; border-bottom: 0; margin-right: 5px; }
    .dots { width: 2px; height: 16px; border-left: 2px dotted #9da2a4; margin: 0 23px 0 6px; }
    .wide .dots { margin-right: 26px; }
    .set { display: flex; align-items: center; gap: 5px; }
    .set.loose { gap: 8px; }
    .wide .set { gap: 6px; }
    .set .loose { margin-left: 3px; }
    .tb { width: 24px; height: 24px; }
    .tb.on { background: #dcdfe1; border: 1px solid #a9adaf; }
    .joined { display: flex; }
    .joined .tb + .tb { border-left: 0; }
    .push { margin: 0 10px 0 auto; font-size: 16px; }
    .wide .push { margin-right: 9px; }
    .wide .set.end { gap: 10px; }
    .filter { display: flex; align-items: center; gap: 4px; padding-left: 12px; height: 29px; }
    .filter .gap { gap: 8px; display: flex; align-items: center; padding-left: 2px; }
    .search { display: flex; align-items: center; width: 211px; height: 29px; border: 1px solid #a4b0b2; background: #fff; }
    .search input { flex: 1; min-width: 0; height: 27px; outline: 0; padding: 0 4px; }
    .tree { list-style: none; margin: 0; padding: 5px 0 0; }
    .node { display: flex; align-items: center; height: 22px; gap: 5px; padding-left: 31px; white-space: nowrap;
      background: linear-gradient(#c4c8ca, #c4c8ca) 19px 0 / 1px 100% no-repeat, linear-gradient(#c4c8ca, #c4c8ca) 19px 50% / 9px 1px no-repeat; }
    .node.last { background: linear-gradient(#c4c8ca, #c4c8ca) 19px 0 / 1px 50% no-repeat, linear-gradient(#c4c8ca, #c4c8ca) 19px 50% / 9px 1px no-repeat; }
    .node.root { padding-left: 11px; background: none; }
    .node.open { padding-left: 14px; background: none; }
    .twist { width: 10px; height: 10px; margin-right: 2px; }
    .twist::before { content: ""; border: 4px solid transparent; border-left: 5px solid #555; border-right: 0; }
    .insert { display: flex; align-items: center; height: 14px; margin: 0 5px 0 11px; color: #5fcb45; }
    .insert::before { content: ""; border: 3px solid transparent; border-left: 4px solid; border-right: 0; }
    .insert::after { content: ""; border: 3px solid transparent; border-right: 4px solid; border-left: 0; }
    .insert span { flex: 1; height: 2px; background: currentColor; }
    .style-row { display: flex; align-items: center; }
    .star { width: 8px; height: 8px; margin-bottom: 6px; }
    .rule { height: 3px; margin: 0 5px 0 8px; background: #dadfde; }
    .model { padding-bottom: 36px; }
    .pick { display: flex; height: 25px; margin: 0 5px 0 8px; border: 1px solid #cfd3d5; background: #f8f8f8; color: #aeb1b3; }
    .pick .ptr { width: 24px; border-right: 1px solid #cfd3d5; background: #ececee; }
    .pick label { flex: 1; display: flex; align-items: center; }
    .pick select { flex: 1; appearance: none; padding: 0 7px; opacity: 1; color: #aeb1b3; align-self: stretch; }
    .pick .dd { width: 15px; align-self: stretch; display: flex; align-items: center; justify-content: center; border-left: 1px solid #d8dbdd; }
    .layers { display: flex; height: 119px; overflow: hidden; margin-right: 5px; }
    .layers .tree { flex: 1; padding: 0; }
    .layers .node { height: 20px; gap: 9px; }
    .layers .twist { margin-right: -2px; }
    .scroll { width: 15px; display: flex; flex-direction: column; background: #dde0e1; border: 1px solid #d5d9da; }
    .scroll button { height: 14px; background: #f8f9fa; }
    .scroll .thumb { height: 58px; background: #f8f9fa; border: 1px solid #c4c8ca; border-width: 1px 0; margin-bottom: auto; }
    .scroll .upa { transform: rotate(180deg); }
    .styles { padding-top: 1px; }
    .curve { padding: 2px 1px; margin-left: -1px; line-height: 18px; }
    .curve.sel { background: #aee2ff; color: #2a2d30; }

    .view { position: relative; overflow: hidden; background: #fff; }
    .scene { position: absolute; inset: 0; width: 100%; height: 100%; }
    .scene text { font: 14px "Liberation Mono", monospace; }
    .viewbar { position: absolute; left: 301px; top: 7px; display: flex; gap: 2px; padding: 3px; border: 1px solid #a5a9ab; background: #f6f8fa; }

    .status { display: flex; border-top: 1px solid #b0bcbc; background: #f6f9fb; padding: 0 2px 0 6px; min-width: 0; }
    .status .left { display: flex; align-items: center; gap: 2px; padding-top: 13px; }
    .status .left .bar { margin: 0 3px 0 5px; }
    .msgs { margin: 0; padding: 8px 0 0; list-style: none; font-size: 11px; flex: 1; min-width: 0; overflow: hidden; }
    .msgs li { display: flex; align-items: center; gap: 1px; white-space: nowrap; }
    .bullet { width: 5px; height: 5px; border-radius: 50%; background: #145a7c; margin: 0 4px; }
    .right { display: flex; align-items: center; padding-top: 12px; gap: 2px; }
    .right .bar:first-child { margin-right: 3px; }
    .right .picked { padding: 0 28px 0 2px; }
    .find { display: flex; width: 43px; height: 25px; border: 1px solid #b4b8ba; background: #fafbfb; }
    .find button:first-child { flex: 1; border-right: 1px solid #c4c8ca; }
    .find button:last-child { width: 14px; }
    .kind { display: flex; align-items: center; width: 177px; height: 25px; border: 1px solid #a9b2b4; background: #f3f5f6; }
    .kind select { flex: 1; appearance: none; padding: 0 7px; height: 23px; }
    .kind .dd { width: 15px; height: 23px; display: flex; align-items: center; justify-content: center; border-left: 1px solid #b4b8ba; }

    .meter { position: absolute; right: 44px; bottom: 100px; width: 42px; height: 150px; border-radius: 8px 8px 21px 21px; background: #3c3f49; box-shadow: 0 2px 8px #0005; color: #fff; display: flex; flex-direction: column; align-items: center; padding-top: 10px; }
    .ring { width: 44px; height: 44px; margin-top: 8px; display: grid; place-items: center; border-radius: 50%; background: radial-gradient(#3c3f49 60%, #2e313b); }
    .ring > * { grid-area: 1 / 1; }
    .pct { font-size: 16px; font-weight: 700; line-height: 20px; }
    .pct small { font-size: 9px; font-weight: 400; color: #b8bac0; }
    .rate { display: flex; align-items: center; gap: 4px; height: 29px; font-size: 11px; line-height: 10px; text-align: center; }
    .rate small { display: block; font-size: 9px; line-height: 9px; color: #b4b6bb; }
    .rates { padding-top: 3px; margin-right: 4px; }
    .mark { position: absolute; right: 12px; bottom: 4px; pointer-events: none; }
    .mark .han { font: italic 300 40px "Noto Sans CJK SC", sans-serif; }
    .mark .url { font: italic 16px "DejaVu Sans", sans-serif; }
  `;

  private btn(name: string, on = false) {
    return html`<button class="tb ${on ? "on" : ""}" aria-label=${name}>${icon(name)}</button>`;
  }

  private renderTitle() {
    return html`<header class="title">
      <div class="brand">${icon("cube")}<span>creo</span><span class="reg">●</span></div>
      <div class="quick">
        ${["newfile", "open", "save"].map((n) => html`<button aria-label=${n}>${icon(n)}</button>`)}
        <div class="pair"><button aria-label="undo">${icon("undo")}</button>${arrow("dim")}</div>
        <div class="pair"><button aria-label="redo">${icon("redo")}</button>${arrow("dim")}</div>
        <button aria-label="regenerate">${icon("regen")}</button>
        <div class="pair"><button aria-label="windows">${icon("windows")}</button>${arrow()}</div>
        <button aria-label="close window">${icon("closex")}</button>
        <div class="pair"><button aria-label="plane">${icon("planeGrid")}</button>${arrow()}</div>
        <span class="bar"></span>${arrow()}
      </div>
      <h1 class="name">EDIT_TANGENT2 (活动的) E:\\Creo 6.0曲面设计教程\\work\\ch11.02\\edit_tangent2.prt.5 - Creo Parametric</h1>
      <div class="winctl">${["min", "max", "close"].map((n) => html`<button aria-label=${n}>${icon(n)}</button>`)}</div>
    </header>`;
  }

  private renderTabs() {
    return html`<nav class="tabs">
      <button class="file">文件</button>
      ${TABS.map((t, i) => html`<button class=${i ? "" : "first"}>${t}</button>`)}
      <button class="active">样式</button>
      <div class="help">
        ${["up", "search", "hat"].map((n) => html`<button aria-label=${n}>${icon(n)}</button>`)}
        ${arrow("white")}<button class="q">?</button>
      </div>
    </nav>`;
  }

  private renderGroup(g: Group) {
    return html`<section class="group">
        <div class="body">
          ${g.big.map(([ic, t, more]) => html`<button class="big">${icon(ic, 32)}<span class="cap">${t}</span>${more ? arrow() : nothing}</button>`)}
          ${g.cols.map((c) => html`<div class="col">${c.map(([ic, t, off]) => html`<button class="cmd" ?disabled=${off}>${icon(ic)}${t}</button>`)}</div>`)}
        </div>
        <div class="glabel">${g.label}${g.more ? arrow() : nothing}</div>
      </section><span class="sep"></span>`;
  }

  private renderSide() {
    return html`<aside class="side">
      <div class="ptabs"><button class="on" aria-label="model tree">${icon("treeTab")}</button><button aria-label="folders">${icon("folders")}</button></div>
      <div class="tools">
        ${arrow()}${icon("greenCube")}<span class="dots"></span>
        <div class="set">${icon("expand")}${icon("collapse")}${this.btn("columnsEye", true)}<span class="bar"></span>
          <div class="set loose">${icon("treeFilter")}${icon("columnsPage")}<span class="bar"></span>${icon("listPage")}</div></div>
        <button class="push" aria-label="more">»</button>
        <button aria-label="settings">${icon("settingsPage")}</button>
      </div>
      <div class="filter">${icon("funnel")}
        <label class="search"><input type="text" aria-label="filter" /><button aria-label="clear">${icon("clear")}</button></label>
        <span class="gap">${arrow()}${icon("plus")}</span>
      </div>
      <div class="model">
        <ul class="tree">
          <li class="node root">${icon("cube")}EDIT_TANGENT2.PRT</li>
          <li class="node open"><button class="twist" aria-label="expand"></button>${icon("listPage")}设计项</li>
          ${FEATURES.map(([ic, t]) => html`<li class="node">${icon(ic)}${t}</li>`)}
        </ul>
        <div class="insert"><span></span></div>
        <div class="node last">${icon("surf")}<span class="style-row">
          <svg class="star" viewBox="0 0 8 8" aria-hidden="true"><path d="M0 0l8 8M8 0L0 8M4 0v8M0 4h8" stroke="#333"/><path d="M2 2h4v4H2z" fill="#ffef00"/></svg>样式 1</span></div>
      </div>
      <div class="rule"></div>
      <div class="tools wide">
        ${arrow()}${icon("layersGreen")}<span class="dots"></span>
        <div class="set">${icon("expand")}${icon("collapse")}<span class="bar"></span>
          <div class="joined">${this.btn("layersEye", true)}${this.btn("layerCube", true)}${this.btn("layerSel", true)}</div></div>
        <button class="push" aria-label="more">»</button>
        <div class="set end"><button aria-label="layer settings">${icon("layersPage")}</button><button aria-label="settings">${icon("settingsPage")}</button></div>
      </div>
      <div class="pick"><button class="ptr" aria-label="pick">${icon("pointer")}</button>
        <label><select disabled aria-label="model"><option>EDIT_TANGENT2.PRT</option></select><span class="dd">${arrow("dim")}</span></label></div>
      <div class="layers">
        <ul class="tree">
          <li class="node root">${icon("layers")}层</li>
          ${LAYERS.map(([ic, t, open]) => html`<li class="node ${open ? "open" : ""}">${open ? html`<button class="twist" aria-label="expand"></button>` : nothing}${icon(ic)}${t}</li>`)}
        </ul>
        <div class="scroll"><button class="upa" aria-label="scroll up">${arrow("dim")}</button><span class="thumb"></span><button aria-label="scroll down">${arrow("dim")}</button></div>
      </div>
      <div class="rule"></div>
      <div class="tools">${arrow()}${icon("greenSurf")}<span class="dots"></span><div class="set loose">${icon("treeFilter")}${icon("columnsPage")}</div></div>
      <ul class="tree styles">
        <li class="node root">${icon("surf")}样式 1</li>
        ${CURVES.map((c, i) => html`<li class="node ${i === CURVES.length - 1 ? "last" : ""}">${icon("cf")}
          <button class="curve ${c === this.selected ? "sel" : ""}" @click=${() => (this.selected = c)}>${c}</button></li>`)}
      </ul>
    </aside>`;
  }

  private renderScene() {
    return html`<svg class="scene" viewBox="298 174 1050 800" preserveAspectRatio="xMinYMin slice" role="img" aria-label="3D view">
      <path d="M319 170L311.500 851.500 1009 861 1017 170z" fill="#f7f4ef"/>
      <path d="M601 170L594 884 635 827 643 170z" fill="#efe8e2"/>
      <path d="M337 413l697 10-42 58-697-10z" fill="#efe8e0"/>
      <path d="M599 417l42 1-1 57-42-1z" fill="#e6dfd4"/>
      <g fill="none" stroke="#996633" shape-rendering="crispEdges">
        <path d="M319 170L311.500 851.500 1009 861 1017 170M601 170L594 884 635 827 643 170"/>
        <path d="M325 412L1047 422 1003 481.500H992M325 412L281 471M337 413L295 471M1034 423L992 481"/>
        <path d="M337 413L1034 422.500M281 470.500L992 480.500M295 471.500L992 481"/>
        <path d="M316 426L1037 437M304 441L1025 452M293 456L1014 467"/>
        <path d="M505 416L464 472M685 418L644 475M866 420L824 478"/>
      </g>
      <path d="M303 470Q318 460 334 456T370 448Q400 441 440 436T490 434H665Q715 434 741 431.500T810 427.500L870 427Q905 424 935 422.500H1021" fill="none" stroke="#1b1b1b" shape-rendering="crispEdges"/>
      <path d="M602 871C700 872 770 810 800 680C817 600 822 540 832 475C840 430 860 407 893 407C930 406 970 439 1000 440Q1014 440 1022 423" fill="none" stroke="#2bcb45"/>
      <g fill="none" stroke="#0000e6" shape-rendering="crispEdges"><path d="M342 418H370" stroke-width="2"/><path d="M357 417v-2.500H385l7 1M406 415.500h27"/></g>
      <g shape-rendering="crispEdges" fill="none"><path d="M619.500 412v34M665.500 423v24" stroke="#2bff2b"/><path d="M620 446.500h28" stroke="#ff2a2a"/></g>
      <path d="M617 419h5v6h-5z" fill="#2bff2b"/><circle cx="665" cy="423" r="2.500" fill="#2bff2b"/>
      <circle cx="664" cy="448" r="2.800" fill="#2be3f0"/><circle cx="642" cy="446" r="2" fill="#f03030"/><circle cx="688.500" cy="447" r="2" fill="#f03a3a"/>
      <g fill="#996633"><text x="511" y="442">PRT_CSYS_DEF</text><text x="1035" y="422">TOP</text><text x="594" y="884">RIGHT</text></g>
      <text x="622" y="409" fill="#2bff2b">Y</text><text x="655" y="459" fill="#ff2a2a">X</text><text x="606" y="460" fill="#2be3f0">Z</text>
    </svg>`;
  }

  private renderStatus() {
    return html`<footer class="status">
      <div class="left">${this.btn("panelEye", true)}${this.btn("globe")}${this.btn("square")}<span class="bar"></span></div>
      <ul class="msgs">
        <li>${icon("hint", 12, 14)}单击可选择曲线。拖动点 (按 SHIFT 捕捉，按 ALT 垂直拖动，按 SHIFT+ALT 延伸)。单击切线端点 (按 ALT 等距拖动两个端点切线)。右键单击点、切线或曲线可调出弹出式菜单。</li>
        <li><span class="bullet"></span>选择 "样式" 几何或下一个工具。拖动选定的曲线进行移动 (按住 CTRL 进行复制)。单击鼠标中键可重复上次使用的工具。</li>
      </ul>
      <div class="right"><span class="bar"></span><span class="bar"></span><div class="find"><button aria-label="find">${icon("binoculars")}</button><button aria-label="find options">${arrow()}</button></div>
        <span class="bar"></span><span class="picked">选择了 1 项</span>
        <label class="kind"><select aria-label="selection filter"><option>样式</option></select><span class="dd">${arrow()}</span></label>${icon("grip", 14, 16)}</div>
    </footer>`;
  }

  private renderMeter() {
    const rate = (v: string, color: string, d: string) => html`<div class="rate">
      <svg width="7" height="8" viewBox="0 0 7 8" aria-hidden="true"><path d=${d} fill=${color}/></svg><span>${v}<small>K/s</small></span></div>`;
    return html`<div class="meter">${icon("shield", 16)}
      <div class="ring"><svg width="44" height="44" viewBox="0 0 44 44" aria-hidden="true">
        <circle cx="22" cy="22" r="19" fill="none" stroke="#555863"/>
        <defs><linearGradient id="rg"><stop stop-color="#7ccf5a"/><stop offset=".500" stop-color="#38b8b0"/><stop offset="1" stop-color="#7ccf5a"/></linearGradient></defs>
        <path d="M3.800 28A19 19 0 0 0 40.200 28" fill="none" stroke="url(#rg)" stroke-width="1.800"/></svg>
        <span class="pct">37<small>%</small></span></div>
      <div class="rates">${rate("0.3", "#18a8f5", "M3.500 0L7 4H4.500v4h-2V4H0z")}${rate("1.0", "#12b566", "M3.500 8L7 4H4.500V0h-2v4H0z")}</div>
    </div>`;
  }

  render() {
    return html`<div class="frame"><div class="window">
      ${this.renderTitle()}${this.renderTabs()}
      <div class="ribbon">${GROUPS.map((g) => this.renderGroup(g))}</div>
      <div class="main">${this.renderSide()}
        <main class="view">${this.renderScene()}
          <div class="viewbar">${VIEW_TOOLS.map((n) => this.btn(n, n === "annot" || n === "spin"))}</div>
        </main></div>
      ${this.renderStatus()}${this.renderMeter()}
      <svg class="mark" width="172" height="80" viewBox="1164 938 172 80">
        <text class="han" x="1165" y="995" fill="#ff6633">野火</text><text class="han" x="1250" y="995">论坛</text>
        <path d="M1235 941Q1250 953 1248 967T1236 982L1231 979Q1240 966 1231 949Q1240 956 1241 964Q1243 952 1235 941z" fill="#ff6633"/>
        <text class="url" x="1168" y="1014" fill="#8c8f91">www.proewildfire.cn</text>
      </svg>
    </div></div>`;
  }
}
